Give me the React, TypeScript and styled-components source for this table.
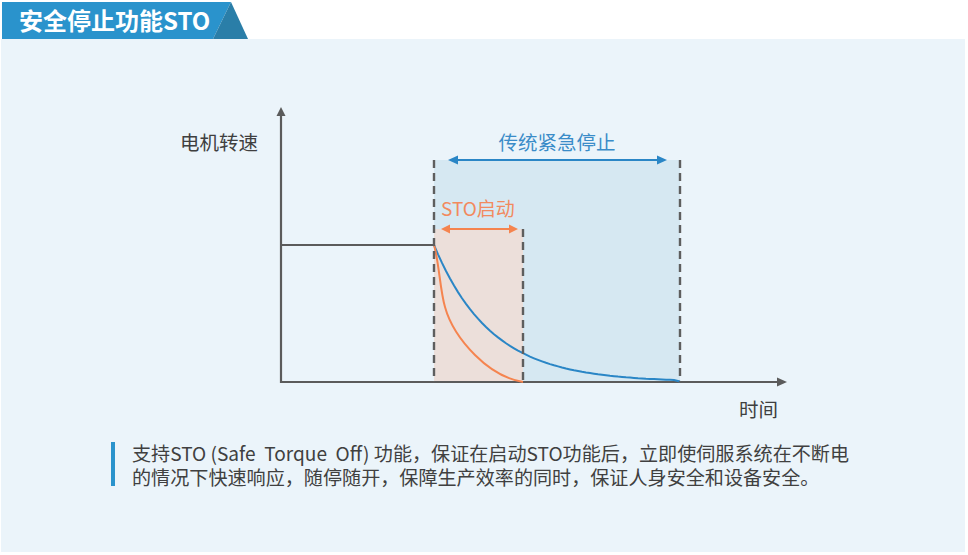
import styled, { createGlobalStyle } from "styled-components";

const GlobalStyle = createGlobalStyle`
	html, body {
		margin: 0;
		padding: 0;
		background: #ffffff;
	}
	body {
		font-family: "Noto Sans CJK SC", "Noto Sans", sans-serif;
	}
`;

const Page = styled.div`
	width: 968px;
	height: 555px;
	display: flex;
	flex-direction: column;
	overflow: hidden;
`;

const Header = styled.div`
	height: 37px;
	margin-top: 2px;
	margin-left: 2px;
	display: flex;
	align-items: stretch;
`;

const TitleTab = styled.div`
	position: relative;
	width: 246px;
	height: 37px;
	display: flex;
	align-items: center;
	padding-left: 17px;
	box-sizing: border-box;
	svg {
		position: absolute;
		inset: 0;
	}
`;

const TitleText = styled.h1`
	position: relative;
	margin: 0;
	font-size: 24px;
	font-weight: 700;
	color: #ffffff;
	line-height: 1;
	padding-bottom: 2px;
`;

const Panel = styled.div`
	flex: 1;
	margin: 0 3px 3px 1px;
	background: #ebf4fa;
	display: flex;
	flex-direction: column;
`;

const ChartBox = styled.div`
	margin: 61px 0 0 159px;
	width: 640px;
	height: 330px;
	svg {
		display: block;
	}
`;

const Note = styled.div`
	margin: 11px 0 0 110px;
	display: flex;
	gap: 17px;
`;

const NoteBar = styled.div`
	width: 4px;
	height: 44px;
	margin-top: 1px;
	background: #2a93cc;
`;

const NoteText = styled.p`
	margin: 0;
	font-size: 19.1px;
	line-height: 24px;
	color: #404040;
`;

const NoteLine = styled.span`
	display: block;
	white-space: pre;
`;

const AXIS = "#5b5b5b";
const BLUE = "#2a86c6";
const ORANGE = "#f5844f";

// blue curve: exponential decay from the stop point to the end of the classic stop
const blueCurve = () => {
	const pts: string[] = [];
	for (let x = 434; x <= 676; x += 4) {
		const y = 382 - 137 * Math.exp(-(x - 434) / 57);
		pts.push(`${x},${y.toFixed(1)}`);
	}
	pts.push("680,381.5");
	return pts.join(" ");
};

function Chart() {
	return (
		<svg width="640" height="330" viewBox="160 100 640 330">
			<rect x="434" y="160" width="246" height="222" fill="#d6e8f2" />
			<rect x="434" y="229" width="89" height="153" fill="#ecdfda" />

			{/* axes */}
			<line x1="281" y1="114" x2="281" y2="383" stroke={AXIS} strokeWidth="2.2" />
			<polygon points="281,107 276.5,116 285.5,116" fill={AXIS} />
			<line x1="280" y1="382" x2="779" y2="382" stroke={AXIS} strokeWidth="2.2" />
			<polygon points="787,382 777,377.5 777,386.5" fill={AXIS} />

			{/* speed before stop */}
			<line x1="281" y1="245" x2="434" y2="245" stroke={AXIS} strokeWidth="2.2" />

			{/* curves */}
			<polyline points={blueCurve()} fill="none" stroke={BLUE} strokeWidth="2" />
			<path
				d="M434,245 C439,262 440,290 445,307 C450,325 460,340 475,355 C490,370 505,379 523,382"
				fill="none"
				stroke={ORANGE}
				strokeWidth="2"
			/>

			{/* dashed markers */}
			<line x1="434" y1="160" x2="434" y2="382" stroke="#5e5e5e" strokeWidth="2.4" strokeDasharray="8 5" />
			<line x1="523" y1="229" x2="523" y2="382" stroke="#5e5e5e" strokeWidth="2.4" strokeDasharray="8 5" />
			<line x1="680" y1="160" x2="680" y2="382" stroke="#5e5e5e" strokeWidth="2.4" strokeDasharray="8 5" />

			{/* classic stop span */}
			<line x1="456" y1="160" x2="659" y2="160" stroke={BLUE} strokeWidth="2" />
			<polygon points="448,160 458,155.5 458,164.5" fill={BLUE} />
			<polygon points="667,160 657,155.5 657,164.5" fill={BLUE} />

			{/* STO span */}
			<line x1="448" y1="229" x2="511" y2="229" stroke={ORANGE} strokeWidth="2" />
			<polygon points="441,229 450,224.5 450,233.5" fill={ORANGE} />
			<polygon points="518,229 509,224.5 509,233.5" fill={ORANGE} />

			<g fontFamily='"Noto Sans CJK SC", "Noto Sans", sans-serif' fontSize="19.5">
				<text x="180" y="150" fill="#3f3f3f">电机转速</text>
				<text x="557" y="150" fill="#3a8cc8" textAnchor="middle">传统紧急停止</text>
				<text x="441" y="216" fill="#f28a5e" fontSize="19">STO启动</text>
				<text x="739" y="417" fill="#3f3f3f">时间</text>
			</g>
		</svg>
	);
}

export default function App() {
	return (
		<Page>
			<GlobalStyle />
			<Header>
				<TitleTab>
					<svg width="246" height="37" viewBox="0 0 246 37">
						<polygon points="0,0 229,0 211,37 0,37" fill="#2a93cc" />
						<polygon points="229,0 246,37 211,37" fill="#2a7ea8" />
					</svg>
					<TitleText>安全停止功能STO</TitleText>
				</TitleTab>
			</Header>
			<Panel>
				<ChartBox>
					<Chart />
				</ChartBox>
				<Note>
					<NoteBar />
					<NoteText>
						<NoteLine>{"支持STO (Safe  Torque  Off) 功能，保证在启动STO功能后，立即使伺服系统在不断电"}</NoteLine>
						<NoteLine>{"的情况下快速响应，随停随开，保障生产效率的同时，保证人身安全和设备安全。"}</NoteLine>
					</NoteText>
				</Note>
			</Panel>
		</Page>
	);
}
